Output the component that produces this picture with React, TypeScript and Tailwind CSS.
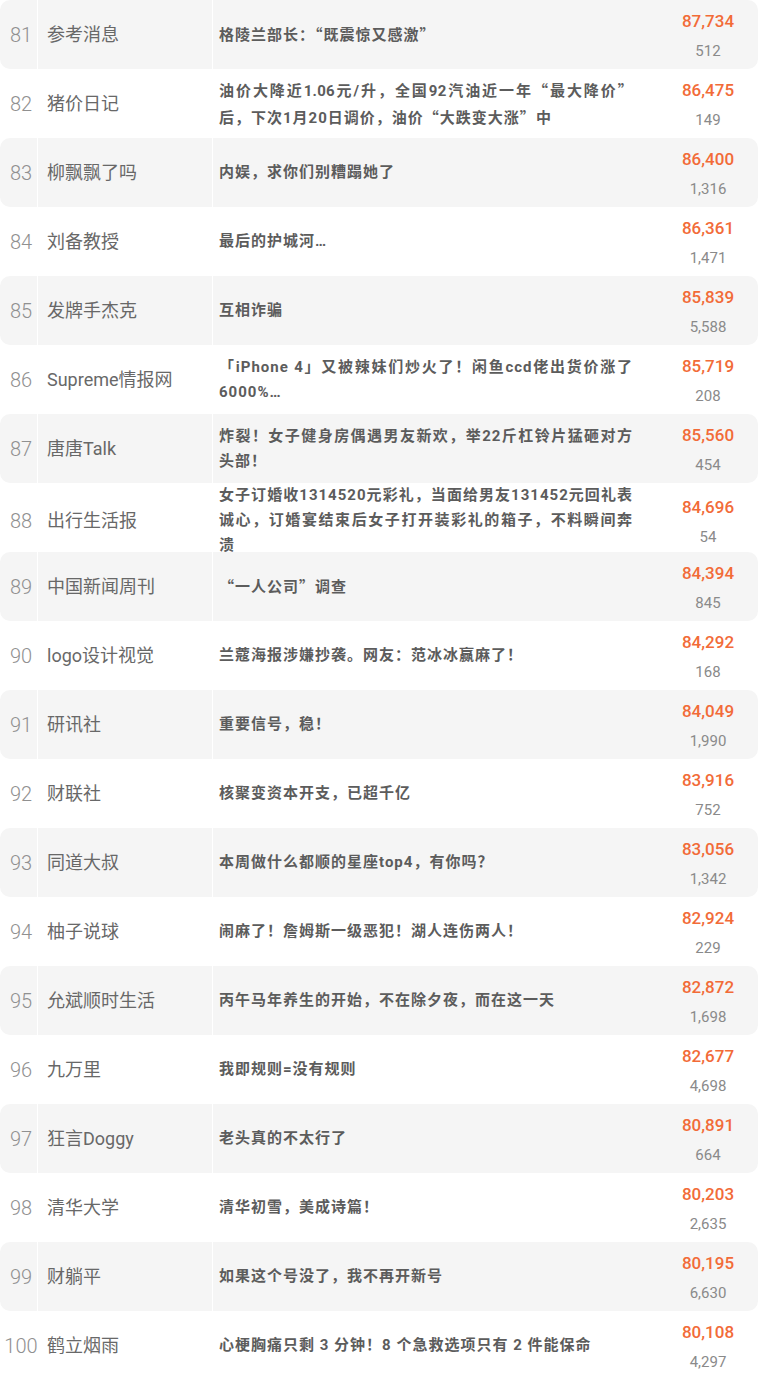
import React from "react";

type Row = [number, string, string | string[], string, string];

const rows: Row[] = [
  [81, "参考消息", "格陵兰部长：“既震惊又感激”", "87,734", "512"],
  [82, "猪价日记", ["油价大降近1.06元/升，全国92汽油近一年“最大降价”", "后，下次1月20日调价，油价“大跌变大涨”中"], "86,475", "149"],
  [83, "柳飘飘了吗", "内娱，求你们别糟蹋她了", "86,400", "1,316"],
  [84, "刘备教授", "最后的护城河…", "86,361", "1,471"],
  [85, "发牌手杰克", "互相诈骗", "85,839", "5,588"],
  [86, "Supreme情报网", "「iPhone 4」又被辣妹们炒火了！闲鱼ccd佬出货价涨了6000%…", "85,719", "208"],
  [87, "唐唐Talk", "炸裂！女子健身房偶遇男友新欢，举22斤杠铃片猛砸对方头部！", "85,560", "454"],
  [88, "出行生活报", "女子订婚收1314520元彩礼，当面给男友131452元回礼表诚心，订婚宴结束后女子打开装彩礼的箱子，不料瞬间奔溃", "84,696", "54"],
  [89, "中国新闻周刊", "“一人公司”调查", "84,394", "845"],
  [90, "logo设计视觉", "兰蔻海报涉嫌抄袭。网友：范冰冰赢麻了！", "84,292", "168"],
  [91, "研讯社", "重要信号，稳！", "84,049", "1,990"],
  [92, "财联社", "核聚变资本开支，已超千亿", "83,916", "752"],
  [93, "同道大叔", "本周做什么都顺的星座top4，有你吗？", "83,056", "1,342"],
  [94, "柚子说球", "闹麻了！詹姆斯一级恶犯！湖人连伤两人！", "82,924", "229"],
  [95, "允斌顺时生活", "丙午马年养生的开始，不在除夕夜，而在这一天", "82,872", "1,698"],
  [96, "九万里", "我即规则=没有规则", "82,677", "4,698"],
  [97, "狂言Doggy", "老头真的不太行了", "80,891", "664"],
  [98, "清华大学", "清华初雪，美成诗篇！", "80,203", "2,635"],
  [99, "财躺平", "如果这个号没了，我不再开新号", "80,195", "6,630"],
  [100, "鹤立烟雨", "心梗胸痛只剩 3 分钟！8 个急救选项只有 2 件能保命", "80,108", "4,297"],
];

function Quoted({ text }: { text: string }) {
  const parts = text.split(/([“”])/);
  return (
    <>
      {parts.map((p, i) =>
        p === "“" || p === "”" ? (
          <span key={i} className="font-['Noto_Sans_CJK_SC',sans-serif]">
            {p}
          </span>
        ) : (
          <React.Fragment key={i}>{p}</React.Fragment>
        )
      )}
    </>
  );
}

function Title({ title }: { title: string | string[] }) {
  if (typeof title === "string") return <Quoted text={title} />;
  return (
    <>
      {title.map((line, i) =>
        i < title.length - 1 ? (
          <span key={i} className="block whitespace-nowrap tracking-[0.2px] [text-align-last:justify]">
            <Quoted text={line} />
          </span>
        ) : (
          <span key={i} className="block">
            <Quoted text={line} />
          </span>
        )
      )}
    </>
  );
}

export default function App() {
  return (
    <div
      className="w-[758px] bg-white"
      style={{ fontFamily: 'Roboto, "Noto Sans CJK SC", sans-serif' }}
    >
      {rows.map(([rank, name, title, big, small], i) => {
        const gray = i % 2 === 0;
        return (
          <div
            key={rank}
            className={
              "grid h-[69px] grid-cols-[38px_175px_1fr_100px] " +
              (gray ? "rounded-[10px] bg-[#f5f5f5]" : "bg-white")
            }
          >
            <div className="flex items-center justify-center border-r border-white pl-[5px] text-[20px] font-light text-[#909090]">
              {rank}
            </div>
            <div className="flex items-center border-r border-white pl-[9px] text-[18px] text-[#686868]">
              {name}
            </div>
            <div className="flex items-center pl-[6px] pr-[25px]">
              <p className="w-full text-justify text-[15px] font-bold leading-[25px] tracking-[1px] text-[#5c5c5c]">
                <Title title={title} />
              </p>
            </div>
            <div className="flex flex-col items-center justify-center">
              <div className="text-[17px] font-medium leading-[32px] text-[#f26b38]">{big}</div>
              <div className="text-[15px] leading-[28px] text-[#8a8a8a]">{small}</div>
            </div>
          </div>
        );
      })}
    </div>
  );
}
